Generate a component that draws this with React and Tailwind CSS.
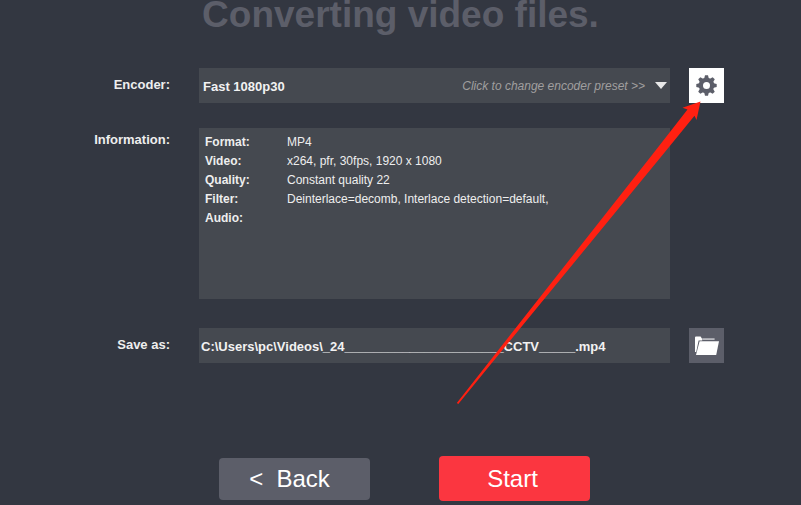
import React from "react";

const details = [
  ["Format:", "MP4"],
  ["Video:", "x264, pfr, 30fps, 1920 x 1080"],
  ["Quality:", "Constant quality 22"],
  ["Filter:", "Deinterlace=decomb, Interlace detection=default,"],
  ["Audio:", ""],
];

const labelClass = "text-right text-[13px] font-bold leading-[18px] text-[#eeeeee]";

function GearIcon() {
  return (
    <svg viewBox="0 0 21 21" className="h-[21px] w-[21px]" aria-hidden="true">
      <g fill="#5c5e69">
        <circle cx="10.5" cy="10.5" r="7.8" />
        {[0, 45, 90, 135].map((angle) => (
          <path
            key={angle}
            d="M9 .3h3l1 4v12.400l-1 4H9l-1-4V4.300z"
            transform={`rotate(${angle} 10.5 10.5)`}
          />
        ))}
      </g>
      <circle cx="10.5" cy="10.5" r="3.5" fill="#fff" />
    </svg>
  );
}

function FolderIcon() {
  return (
    <svg viewBox="0 0 24 20" className="h-5 w-6" aria-hidden="true">
      <path d="M0 16V1.600Q0 .6 1 .6h4.600L7.200 3v1.600H3.600L1.200 16z" fill="#fff" />
      <path d="M7.200 2.200h12.400V4H7.200z" fill="#b9bac0" />
      <path d="M4.600 5.200H24L21.200 19H1z" fill="#fff" />
    </svg>
  );
}

export default function App() {
  return (
    <div className="relative min-h-screen overflow-hidden bg-[#333741] font-['Liberation_Sans',Arial,sans-serif]">
      <main className="px-[77px] pb-1">
        <h1 className="-mt-[7px] text-center text-[37px] font-bold leading-[44px] text-[#5c5e69]">
          Converting video files.
        </h1>

        <form
          className="mt-[31px] grid grid-cols-[93px_minmax(0,1fr)_35px] gap-x-[19px]"
          onSubmit={(e) => e.preventDefault()}
        >
          <label htmlFor="encoder" className={`pt-2 ${labelClass}`}>
            Encoder:
          </label>
          <div className="relative ml-[10px]">
            <select
              id="encoder"
              className="h-[35px] w-full appearance-none bg-[#454950] px-1 pt-[2px] text-[13px] font-bold text-[#f2f2f2] outline-none"
            >
              <option>Fast 1080p30</option>
            </select>
            <div className="pointer-events-none absolute inset-y-0 right-[3px] flex items-center gap-[10px]">
              <span className="text-xs italic text-[#a09f9f]">
                Click to change encoder preset &gt;&gt;
              </span>
              <svg viewBox="0 0 12 7" className="h-[7px] w-3" aria-hidden="true">
                <path d="M0 0h12L6 7z" fill="#e8e8e8" />
              </svg>
            </div>
          </div>
          <button
            type="button"
            aria-label="Encoder settings"
            className="flex h-[35px] items-center justify-center bg-white"
          >
            <GearIcon />
          </button>

          <h2 className={`mt-[25px] pt-[3px] ${labelClass}`}>Information:</h2>
          <dl className="mt-[25px] ml-[10px] grid h-[171px] grid-cols-[82px_1fr] content-start bg-[#454950] px-[6px] pt-[5px] text-xs leading-[19px] text-[#eeeeee]">
            {details.map(([name, value]) => (
              <React.Fragment key={name}>
                <dt className="font-bold">{name}</dt>
                <dd>{value}</dd>
              </React.Fragment>
            ))}
          </dl>
          <span />

          <label htmlFor="path" className={`mt-[29px] pt-2 ${labelClass}`}>
            Save as:
          </label>
          <input
            id="path"
            type="text"
            defaultValue={"C:\\Users\\pc\\Videos\\_24______________________CCTV_____.mp4"}
            className="mt-[29px] ml-[10px] h-[35px] bg-[#454950] px-[2px] pt-[2px] text-[13px] font-bold text-[#f2f2f2] outline-none"
          />
          <button
            type="button"
            aria-label="Choose folder"
            className="mt-[29px] flex h-[35px] items-center justify-center bg-[#5c5e69]"
          >
            <FolderIcon />
          </button>
        </form>

        <div className="mt-[93px] flex items-center justify-center gap-[69px] pl-2 text-2xl text-white">
          <button
            type="button"
            className="h-[42px] w-[151px] whitespace-pre rounded bg-[#5c5e69] pr-[10px]"
          >
            {"<  Back"}
          </button>
          <button type="button" className="h-[45px] w-[151px] rounded bg-[#fb3640] pr-1">
            Start
          </button>
        </div>
      </main>

      <svg
        viewBox="456 101 245 304"
        className="pointer-events-none absolute left-[456px] top-[101px] h-[304px] w-[245px]"
        aria-hidden="true"
      >
        <path
          d="M456.800 403L522 320L652 155L687.500 109.500L682.500 107.800L700.500 101.500L696.500 120L694.500 115.800L662.500 155L527 320L458.300 404z"
          fill="#ff2011"
        />
      </svg>
    </div>
  );
}
